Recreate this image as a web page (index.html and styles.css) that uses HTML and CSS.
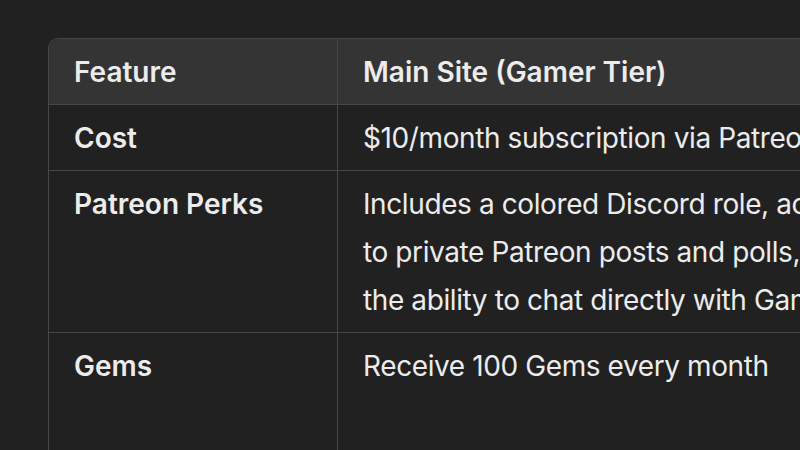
FILE: index.html
```html
<!DOCTYPE html>
<html>
<head>
<meta charset="utf-8">
<link rel="stylesheet" href="styles.css">
</head>
<body>
<div class="wrap">
  <table class="cmp">
    <thead>
      <tr>
        <th class="c1">Feature</th>
        <th class="c2">Main Site (Gamer Tier)</th>
        <th class="c3">Discord Only</th>
      </tr>
    </thead>
    <tbody>
      <tr>
        <td class="c1 key">Cost</td>
        <td class="c2">$10/month subscription via Patreon</td>
        <td class="c3">Free</td>
      </tr>
      <tr>
        <td class="c1 key">Patreon Perks</td>
        <td class="c2">Includes a colored Discord role, access to private Patreon posts and polls, and the ability to chat directly with Gamer</td>
        <td class="c3">None</td>
      </tr>
      <tr>
        <td class="c1 key">Gems</td>
        <td class="c2">Receive 100 Gems every month</td>
        <td class="c3">No Gems are given to Discord-only members each month</td>
      </tr>
    </tbody>
  </table>
</div>
</body>
</html>
```
FILE: styles.css
```css
html, body {
  margin: 0;
  padding: 0;
  background: #212121;
  overflow: hidden;
  width: 800px;
  height: 450px;
}
body {
  padding: 38px 0 0 48px;
  box-sizing: border-box;
  font-family: Inter, "Noto Sans", sans-serif;
  color: #ececec;
}
.wrap {
  width: 1206px;
  border: 1px solid #474747;
  border-radius: 10px;
  overflow: hidden;
}
.cmp {
  border-collapse: separate;
  border-spacing: 0;
  width: 1206px;
  table-layout: fixed;
  font-size: 28px;
  line-height: 48px;
}
.cmp th, .cmp td {
  text-align: left;
  vertical-align: top;
  padding: 9px 25px 8px 25px;
  border-bottom: 1px solid #474747;
  border-right: 1px solid #474747;
}
.cmp th {
  background: #343434;
  font-weight: 600;
}
.cmp td {
  font-weight: 400;
  letter-spacing: -0.4px;
}
.cmp td.key {
  font-weight: 600;
  letter-spacing: 0;
}
.c1 { width: 238px; }
.c2 { width: 515px; }
.c3 { width: 300px; }
```
